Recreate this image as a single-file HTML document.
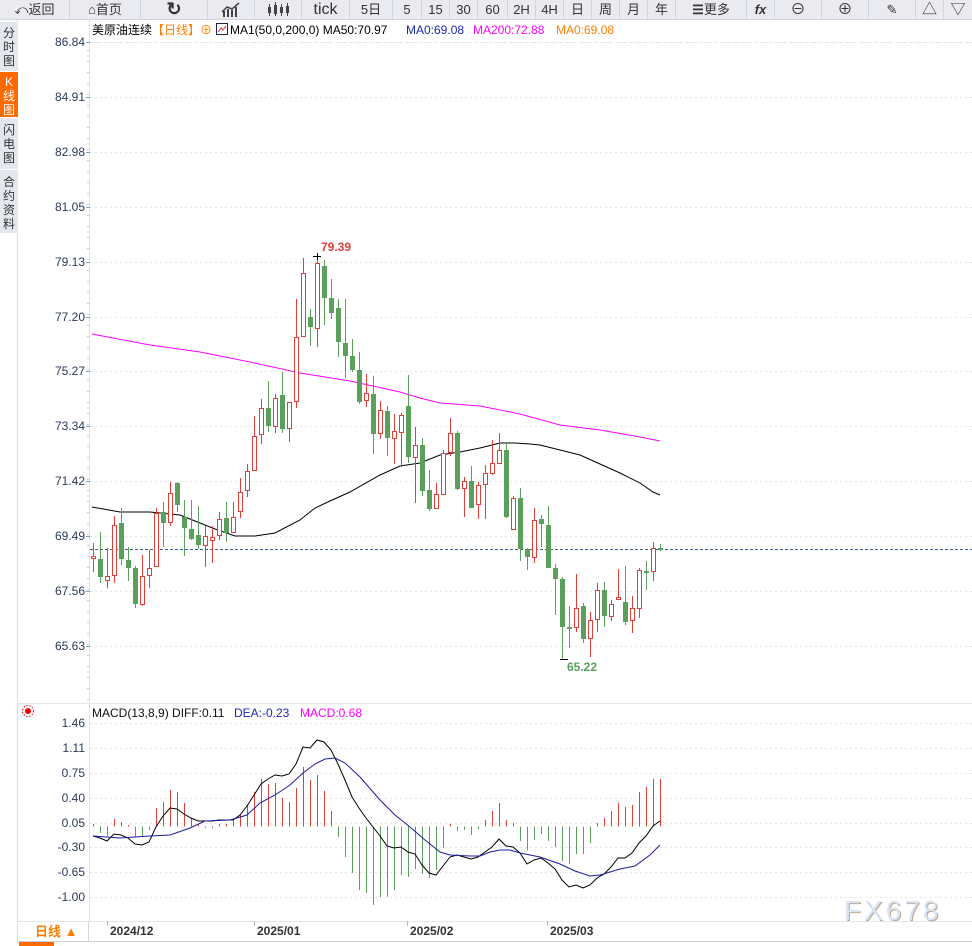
<!DOCTYPE html>
<html><head><meta charset="utf-8">
<style>
*{margin:0;padding:0;box-sizing:border-box}
body{width:972px;height:946px;overflow:hidden;background:#fff;font-family:"Liberation Sans","Noto Sans CJK SC",sans-serif;position:relative}
#tb{position:absolute;left:0;top:0;width:972px;height:20px;background:#e9ebf1;border-bottom:1px solid #d2d6df}
.b{position:absolute;top:0;height:20px;border-right:1px solid #d0d4dc;font-size:13px;color:#333;text-align:center;line-height:19px}
#side{position:absolute;left:0;top:20px;width:18px;height:925px;background:#fff;border-right:1px solid #d8dce4}
.s{position:absolute;left:0;width:18px;background:#e4e7ee;font-size:12px;line-height:14px;text-align:center;color:#333;border-bottom:1px solid #fff}
svg{position:absolute;left:0;top:0}
</style></head><body>
<div id="tb">
<div class="b" style="left:0;width:70px">&#10554;返回</div>
<div class="b" style="left:70px;width:71px">&#8962;首页</div>
<div class="b" style="left:141px;width:67px;font-size:18px;font-weight:bold">&#8635;</div>
<div class="b" style="left:208px;width:47px"><svg width="47" height="20"><g fill="#444"><rect x="15" y="11" width="2" height="6"/><rect x="19" y="9" width="2" height="8"/><rect x="23" y="10" width="2" height="7"/><rect x="27" y="7" width="2" height="10"/></g><path d="M14 12 L19 7 L24 9 L31 3" stroke="#444" fill="none" stroke-width="1.5"/></svg></div>
<div class="b" style="left:255px;width:47px"><svg width="47" height="20"><g fill="#444"><rect x="13" y="7" width="3" height="6"/><rect x="19" y="5" width="3" height="9"/><rect x="25" y="7" width="3" height="6"/><rect x="31" y="6" width="3" height="7"/><rect x="14" y="4" width="1" height="12"/><rect x="20" y="2" width="1" height="14"/><rect x="26" y="4" width="1" height="12"/><rect x="32" y="3" width="1" height="13"/></g></svg></div>
<div class="b" style="left:302px;width:48px;font-size:16px">tick</div>
<div class="b" style="left:350px;width:43px">5日</div>
<div class="b" style="left:393px;width:29px">5</div>
<div class="b" style="left:422px;width:28px">15</div>
<div class="b" style="left:450px;width:28px">30</div>
<div class="b" style="left:478px;width:30px">60</div>
<div class="b" style="left:508px;width:28px">2H</div>
<div class="b" style="left:536px;width:28px">4H</div>
<div class="b" style="left:564px;width:28px">日</div>
<div class="b" style="left:592px;width:28px">周</div>
<div class="b" style="left:620px;width:28px">月</div>
<div class="b" style="left:648px;width:28px">年</div>
<div class="b" style="left:676px;width:71px"><b>&#9776;</b>更多</div>
<div class="b" style="left:747px;width:28px;font-weight:bold;font-style:italic">fx</div>
<div class="b" style="left:775px;width:47px;font-size:15px">&#8854;</div>
<div class="b" style="left:822px;width:47px;font-size:15px">&#8853;</div>
<div class="b" style="left:869px;width:47px">&#9998;</div>
<div class="b" style="left:916px;width:28px;font-size:15px">&#9651;</div>
<div class="b" style="left:944px;width:28px;font-size:15px;border:none">&#9661;</div>
</div>
<div id="side">
<div class="s" style="top:2px;height:50px;padding-top:4px">分<br>时<br>图</div>
<div class="s" style="top:52px;height:46px;padding-top:3px;background:#ff6a00;color:#fff">K<br>线<br>图</div>
<div class="s" style="top:98px;height:52px;padding-top:5px">闪<br>电<br>图</div>
<div class="s" style="top:150px;height:64px;padding-top:5px">合<br>约<br>资<br>料</div>
</div>
<svg id="c" width="972" height="946" xmlns="http://www.w3.org/2000/svg"></svg>
<script>
var S=document.getElementById('c'),h='';
function t(x,y,s,c,o){h+='<text x="'+x+'" y="'+y+'" fill="'+c+'" font-size="'+(o&&o.fs||12)+'" '+(o&&o.a?'text-anchor="'+o.a+'" ':'')+(o&&o.w?'font-weight="bold" ':'')+(o&&o.ls?'letter-spacing="'+o.ls+'" ':'')+'font-family="Liberation Sans,Noto Sans CJK SC,sans-serif">'+s+'</text>';}
function L(x1,y1,x2,y2,c,w,d){h+='<line x1="'+x1+'" y1="'+y1+'" x2="'+x2+'" y2="'+y2+'" stroke="'+c+'" stroke-width="'+(w||1)+'"'+(d?' stroke-dasharray="'+d+'"':'')+'/>';}
function P(pts,c){h+='<polyline fill="none" stroke="'+c+'" stroke-width="1" points="'+pts+'"/>';}
L(89.5,20,89.5,921,'#dde3ea');
L(18,703.5,972,703.5,'#e3e8ee');
L(90,42.5,972,42.5,'#e8e8e8',1,'4,3');
var pl=[['86.84',42],['84.91',97],['82.98',152],['81.05',207],['79.13',262],['77.20',317],['75.27',371],['73.34',426],['71.42',481],['69.49',536],['67.56',591],['65.63',646]];
pl.forEach(function(p){t(85,p[1]+4,p[0],'#2a3a5a',{a:'end'});L(90,p[1]+.5,972,p[1]+.5,'#e4e4e4',1,'2,3');L(86,p[1]+.5,90,p[1]+.5,'#7ab');});
for(var y=50;y<700;y+=11)L(87,y+.5,89,y+.5,'#bcd');
var ml=[['1.46',723],['1.11',748],['0.75',773],['0.40',798],['0.05',823],['-0.30',847],['-0.65',872],['-1.00',897]];
ml.forEach(function(p){t(85,p[1]+4,p[0],'#2a3a5a',{a:'end'});L(90,p[1]+.5,972,p[1]+.5,'#e4e4e4',1,'2,3');});
t(92,34,'美原油连续','#000');t(152,34,'【日线】','#ff7f00');t(200,34,'⊕','#ff7f00');
h+='<rect x="216.5" y="23.5" width="11" height="11" fill="#fff" stroke="#224"/><path d="M218 32 L221 28 L223 30 L226 26" stroke="#d33" fill="none"/>';
t(230,34,'MA1(50,0,200,0)  MA50:70.97','#000');t(406,34,'MA0:69.08','#1c2ab0');t(473,34,'MA200:72.88','#ff00ff');t(556,34,'MA0:69.08','#ff7f00');
P('92,334 150,345 200,352 250,362 300,373 350,381 400,392 420,398 440,403 480,406 520,414 560,425 600,430 640,437 660,441','#ff00ff');
P('92,507 120,512 150,512 180,515 200,523 215,529 235,536 255,536 275,533 300,520 315,508 330,501 350,492 380,475 400,466 420,463 440,455 460,452 480,448 500,443 515,443 530,444 540,445 560,450 580,455 600,464 620,473 640,483 653,492 660,495','#000');
L(90,549.5,972,549.5,'#3a5f8a',1,'3,2');
var C=[[556,558,543,572,1],[559,577,532,583,0],[576,580,548,588,1],[525,575,516,583,1],[523,559,508,565,0],[560,568,547,581,0],[568,604,566,608,0],[576,604,555,606,1],[568,575,550,588,1],[513,566,508,566,1],[512,523,502,547,0],[493,522,482,526,1],[483,505,482,512,0],[517,528,500,556,0],[529,539,500,540,0],[535,545,506,549,0],[536,545,526,567,1],[537,540,526,563,1],[519,535,512,540,1],[518,533,502,542,0],[517,532,502,533,1],[492,511,478,518,1],[471,490,464,497,1],[436,470,416,471,1],[408,434,399,444,1],[408,426,381,432,0],[398,426,394,433,1],[395,429,372,433,0],[402,428,402,442,1],[337,401,299,408,1],[273,336,258,337,1],[317,327,309,346,0],[263,328,255,347,1],[266,298,260,325,0],[298,313,279,319,0],[308,342,299,357,0],[343,356,299,378,0],[356,370,339,372,0],[370,402,352,404,0],[393,400,374,407,1],[394,434,376,454,0],[410,433,401,439,1],[411,438,406,456,0],[431,438,414,464,1],[415,432,413,467,1],[406,457,375,463,0],[445,457,427,503,1],[445,491,438,496,0],[490,509,470,511,0],[494,508,483,509,1],[453,494,450,495,1],[433,452,418,456,1],[433,489,431,490,0],[481,488,477,517,1],[481,508,466,508,0],[485,504,482,519,1],[473,484,465,519,1],[463,473,440,475,1],[450,463,433,464,1],[450,517,443,518,0],[498,529,496,530,1],[498,549,488,561,0],[549,557,548,570,0],[520,557,508,563,1],[519,524,515,547,0],[525,568,506,568,0],[568,579,564,615,0],[579,627,577,659,0],[627,629,606,648,0],[608,627,574,632,1],[606,639,603,643,0],[620,638,612,657,1],[590,619,583,632,1],[590,616,582,627,0],[604,616,600,621,1],[597,599,569,600,1],[602,622,566,625,0],[608,620,596,633,1],[570,608,568,618,1],[571,573,561,590,0],[548,571,542,581,1],[548,550,544,551,0]];
C.forEach(function(c,i){var x=93+7*i+.5,col=c[4]?'#e0403a':'#5aa05a';
if(c[4]){L(x,c[2],x,c[0],col);L(x,c[1],x,c[3],col);h+='<rect x="'+(x-2)+'" y="'+(c[0]+.5)+'" width="4" height="'+Math.max(c[1]-c[0],1)+'" fill="#fff" stroke="'+col+'"/>';}
else{L(x,c[2],x,c[3],col);h+='<rect x="'+(x-2.5)+'" y="'+c[0]+'" width="5" height="'+Math.max(c[1]-c[0],1.5)+'" fill="'+col+'"/>';}});
L(313,256.5,321,256.5,'#000');L(317.5,253,317.5,260,'#000');t(321,251,'79.39','#e0403a',{w:1});
L(560,659.5,568,659.5,'#000');t(567,671,'65.22','#5aa05a',{w:1});
h+='<circle cx="28" cy="711" r="3" fill="#e00"/><circle cx="28" cy="711" r="5.5" fill="none" stroke="#e00" stroke-dasharray="1.5,1.5"/>';
t(92,717,'MACD(13,8,9) DIFF:0.11','#111');t(234,717,'DEA:-0.23','#1c2ab0');t(300,717,'MACD:0.68','#ff00ff');
var M=[824,833,836,819,822,825,837,837,830,808,802,790,792,803,818,824,828,828,824,824,820,815,805,792,779,784,783,798,802,788,767,780,775,791,811,837,857,873,890,893,905,897,897,890,875,877,869,874,878,870,848,824,831,830,835,829,820,811,803,820,823,841,850,840,834,841,847,861,864,854,854,843,823,818,811,803,807,805,792,787,779,779];
M.forEach(function(v,i){var x=93+7*i+.5;L(x,826.5,x,v,v<826?'#e0403a':'#5aa05a');});
P('93,836 100,838 107,841 114,834 121,835 128,838 135,844 142,845 149,842 156,827 163,816 170,808 177,809 184,814 191,818 198,821 205,821 212,821 219,820 226,820 233,820 240,815 247,806 254,795 261,784 268,779 275,775 282,776 289,774 296,764 303,747 310,748 317,740 324,742 331,750 338,764 345,780 352,797 359,808 366,818 373,827 380,836 387,846 394,848 401,847 408,852 415,854 422,865 429,873 436,875 443,866 450,857 457,855 464,857 471,859 478,857 485,852 492,847 499,839 506,846 513,847 520,853 527,864 534,860 541,858 548,863 555,869 562,880 569,887 576,885 583,888 590,885 597,878 604,874 611,867 618,858 625,858 632,853 639,843 646,836 653,826 660,821','#000');
P('93,836 120,838 150,836 170,835 190,828 205,821 230,820 247,815 260,803 275,795 290,785 303,773 315,764 325,759 335,758 345,763 360,777 380,800 395,815 410,827 425,840 440,852 450,855 470,856 480,856 490,852 500,850 510,850 520,853 540,857 560,864 575,871 590,876 600,875 620,869 635,866 650,855 660,845','#1c1ca0');
L(18,921.5,972,921.5,'#e0e6ec');L(18,941.5,972,941.5,'#c8d0d8');L(88.5,921,88.5,941,'#d0d6de');
t(35,936,'日线 ▲','#ff7f00',{fs:13,w:1});
[[110,'2024/12'],[257,'2025/01'],[410,'2025/02'],[550,'2025/03']].forEach(function(d){L(d[0]-2.5,921,d[0]-2.5,926,'#bbb');t(d[0],935,d[1],'#333',{fs:12,w:1});});
h+='<rect x="19" y="942" width="35" height="4" fill="#ff6a00"/>';
t(845,921,'FX678','#c0a890',{fs:28,ls:3});
t(844,920,'FX678','#d6e4f6',{fs:28,ls:3});
S.innerHTML=h;
</script>
</body></html>
